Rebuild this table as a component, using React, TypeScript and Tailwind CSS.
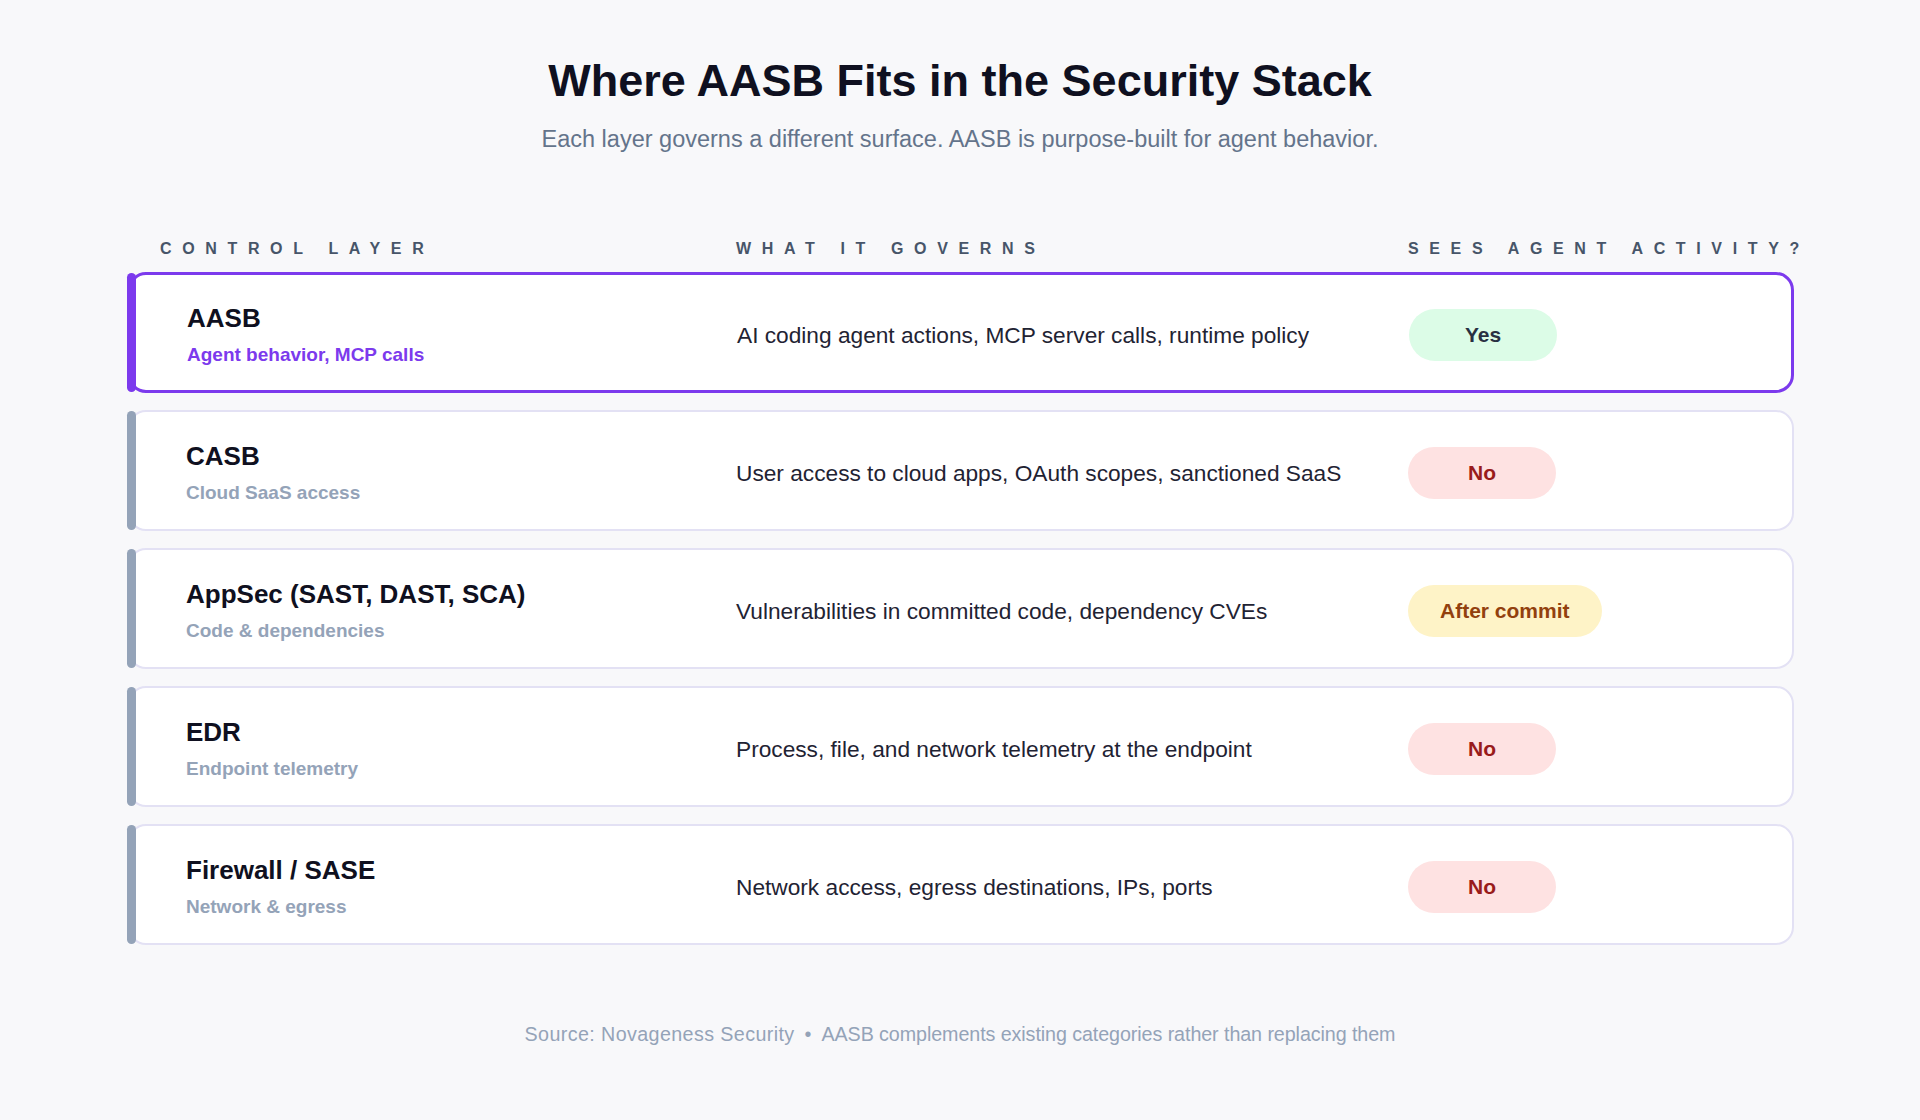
import React from 'react';

type Tone = 'yes' | 'no' | 'warn';

type Layer = {
  name: string;
  sub: string;
  desc: string;
  badge: string;
  tone: Tone;
  active?: boolean;
};

const LAYERS: Layer[] = [
  { name: 'AASB', sub: 'Agent behavior, MCP calls', desc: 'AI coding agent actions, MCP server calls, runtime policy', badge: 'Yes', tone: 'yes', active: true },
  { name: 'CASB', sub: 'Cloud SaaS access', desc: 'User access to cloud apps, OAuth scopes, sanctioned SaaS', badge: 'No', tone: 'no' },
  { name: 'AppSec (SAST, DAST, SCA)', sub: 'Code & dependencies', desc: 'Vulnerabilities in committed code, dependency CVEs', badge: 'After commit', tone: 'warn' },
  { name: 'EDR', sub: 'Endpoint telemetry', desc: 'Process, file, and network telemetry at the endpoint', badge: 'No', tone: 'no' },
  { name: 'Firewall / SASE', sub: 'Network & egress', desc: 'Network access, egress destinations, IPs, ports', badge: 'No', tone: 'no' },
];

const toneClass: Record<Tone, string> = {
  yes: 'bg-[#dcfce7] text-[#283042]',
  no: 'bg-[#fee2e2] text-[#991b1b]',
  warn: 'bg-[#fef3c7] text-[#92400e]',
};

function Badge({ label, tone }: { label: string; tone: Tone }) {
  return (
    <span className={`inline-flex h-[52px] min-w-[148px] items-center justify-center rounded-full px-8 text-[21px] font-bold ${toneClass[tone]}`}>
      {label}
    </span>
  );
}

function LayerRow({ layer }: { layer: Layer }) {
  return (
    <div className="relative">
      <div
        className={`grid h-[121px] grid-cols-[606px_672px_1fr] items-center rounded-[18px] bg-white pt-[5px] ${
          layer.active ? 'border-[3px] border-[#7c3aed]' : 'border-2 border-[#e3e1f4]'
        }`}
      >
        <div className="flex flex-col gap-[10px] pl-[56px]">
          <div className="text-[26px] font-bold leading-[30px] text-[#0f1020]">{layer.name}</div>
          <div className={`text-[19px] font-bold leading-[24px] ${layer.active ? 'text-[#7c3aed]' : 'text-[#94a3b8]'}`}>
            {layer.sub}
          </div>
        </div>
        <div className="text-[22.7px] leading-[30px] text-[#1f2333]">{layer.desc}</div>
        <div>
          <Badge label={layer.badge} tone={layer.tone} />
        </div>
      </div>
      {/* accent bar sits over the card's left border */}
      <span
        className={`absolute left-[-1px] top-[1px] bottom-[1px] w-[9px] rounded-full ${
          layer.active ? 'bg-[#7c3aed]' : 'bg-[#94a3b8]'
        }`}
      />
    </div>
  );
}

export default function App() {
  return (
    <div className="min-h-screen w-full bg-[#f8f8fa] pt-[54px] font-['Liberation_Sans',Arial,sans-serif]">
      <h1 className="text-center text-[45px] font-bold leading-[54px] text-[#0f1020]">
        Where AASB Fits in the Security Stack
      </h1>
      <p className="mt-[17px] text-center text-[23.5px] leading-[28px] text-[#64748b]">
        Each layer governs a different surface. AASB is purpose-built for agent behavior.
      </p>

      <div className="ml-[128px] mt-[86px] w-[1666px]">
        <div className="grid grid-cols-[608px_672px_1fr] whitespace-nowrap text-[16px] font-bold uppercase leading-[20px] tracking-[0.665em] text-[#475569]">
          <div className="pl-8">Control Layer</div>
          <div>What it governs</div>
          <div>Sees agent activity?</div>
        </div>

        <div className="mt-[13px] flex flex-col gap-[17px]">
          {LAYERS.map((l) => (
            <LayerRow key={l.name} layer={l} />
          ))}
        </div>
      </div>

      <p className="mt-[77px] text-center text-[19.7px] leading-[24px] text-[#94a3b8]">
        <span className="tracking-[0.02em]">Source: Novageness Security</span>
        <span className="mx-[10px]">•</span>
        <span className="tracking-[-0.004em]">AASB complements existing categories rather than replacing them</span>
      </p>
    </div>
  );
}
